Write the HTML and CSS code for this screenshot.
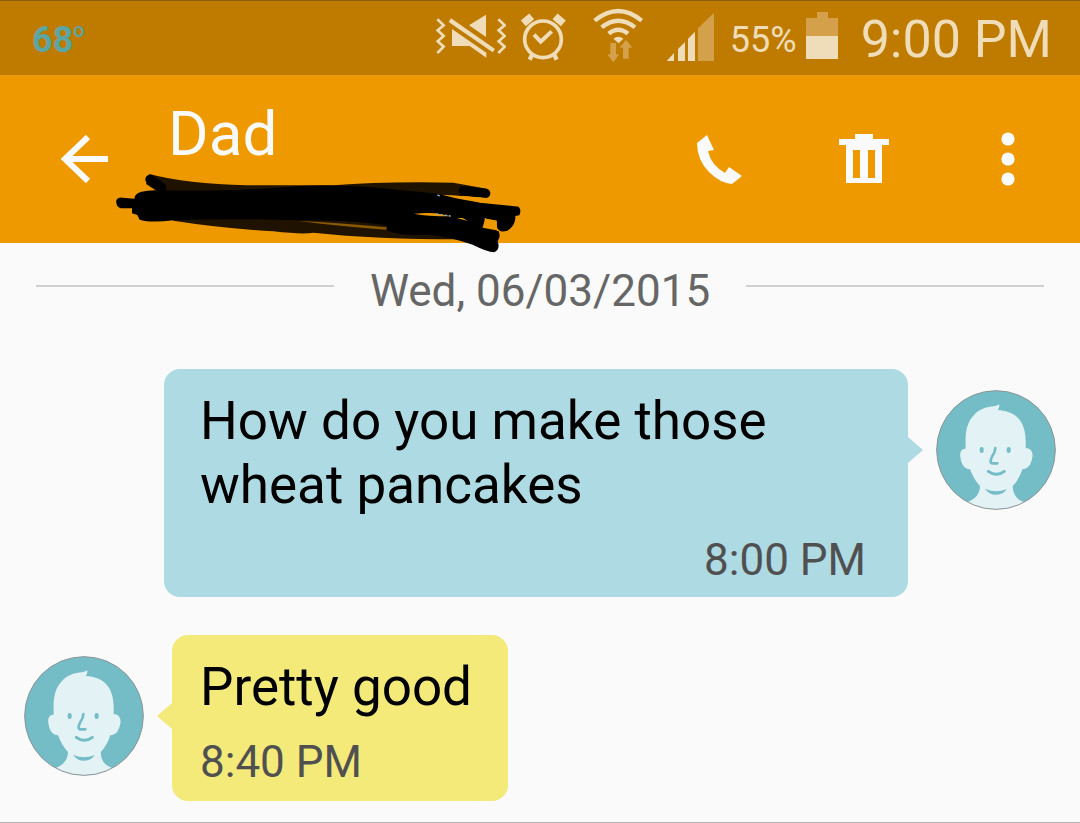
FILE: index.html
```html
<!DOCTYPE html>
<html lang="en">
<head>
    <meta charset="UTF-8">
    <meta name="viewport" content="width=device-width, initial-scale=1.0">
    <title>Messages - Dad</title>
    <link rel="stylesheet" href="styles.css">
</head>
<body>
    <!-- Avatar shared by both sides of the conversation -->
    <svg class="defs" aria-hidden="true">
        <symbol id="avatar" viewBox="138 60 360 360">
            <clipPath id="avatar-clip"><circle cx="318" cy="240" r="179"/></clipPath>
            <circle cx="318" cy="240" r="178" fill="#74bcc6"/>
            <g clip-path="url(#avatar-clip)">
                <path fill="#e2f2f5" d="M227 236 C225 190 229 160 250 137 C268 117 292 110 311 109 Q321 108 328 103 Q329 113 323 120 C350 121 376 131 391 152 C407 176 408 205 407 234 C422 234 430 247 427 262 C424 283 414 298 397 298 C390 320 380 336 368 348 C369 374 380 389 404 396 L404 430 L232 430 L232 396 C255 389 270 371 270 348 C256 334 248 318 240 298 C222 297 213 280 211 261 C209 247 213 236 227 236 Z"/>
                <g fill="none" stroke="#74bcc6" stroke-linecap="round">
                    <path stroke-width="12" d="M275 237 V243 M356 237 V243"/>
                    <path stroke-width="8" stroke-linejoin="round" d="M316 234 Q316 246 307 258 Q296 279 308 280 H322"/>
                    <path stroke-width="9" d="M295 304 Q319 322 343 304"/>
                </g>
                <path fill="#74bcc6" d="M285 356 Q318 371 350 357 Q341 374 318 374 Q297 374 285 356 Z"/>
            </g>
            <circle cx="318" cy="240" r="178" fill="none" stroke="#8b9496" stroke-width="3"/>
        </symbol>
    </svg>

    <div class="status-bar">
        <span class="temperature">68<span class="degree">o</span></span>
        <div class="status-icons">
            <svg width="72" height="75" viewBox="33 0 216 225" role="img" aria-label="Vibrate">
                <g fill="none" stroke="#efdcb8" stroke-width="8">
                    <path d="M43 58 L62 76 L44 91 L62 108 L44 124 L62 140 L43 159"/>
                    <path d="M226 58 L245 76 L227 91 L245 108 L227 124 L245 140 L226 159"/>
                </g>
                <g fill="#efdcb8">
                    <path d="M84 55 L216 147 L209 157 L77 66 Z"/>
                    <path d="M189 44 V111 L138 76 Z"/>
                    <path d="M87 87 L190 158 V173 L140 138 H87 Z"/>
                </g>
            </svg>
            <svg width="58" height="75" viewBox="291 0 174 225" role="img" aria-label="Alarm set">
                <g fill="none" stroke="#efdcb8">
                    <circle cx="360" cy="118" r="55" stroke-width="11"/>
                    <path stroke-width="12" d="M333 104 L353 125 L386 94"/>
                    <path stroke-width="13" d="M328 163 L320 179 M393 163 L401 179"/>
                    <path stroke-width="23" d="M301 70 L326 49 M421 70 L396 49"/>
                </g>
            </svg>
            <svg width="58" height="75" viewBox="507 0 174 225" role="img" aria-label="Wi-Fi">
                <g fill="none" stroke="#efdcb8" stroke-width="13">
                    <path d="M515 62 Q586 4 656 62"/>
                    <path d="M536 82 Q586 42 636 82"/>
                    <path d="M557 101 Q586 77 615 101"/>
                </g>
                <path fill="#efdcb8" d="M571 116 Q586 104 601 116 L587 130 Z"/>
                <path fill="#d4a04a" d="M562 129 H579 V163 H589 L571 187 L553 163 H562 Z M600 176 V143 H590 L609 119 L628 143 H617 V176 Z"/>
            </svg>
            <svg width="52" height="75" viewBox="723 0 156 225" role="img" aria-label="Signal strength">
                <g fill="#efdcb8">
                    <path d="M731 183 L753 159 V183 Z"/>
                    <path d="M765 183 V147 L786 126 V183 Z"/>
                    <path d="M795 183 V116 L816 95 V183 Z"/>
                </g>
                <path fill="#d4a04a" d="M825 183 V85 L873 38 V183 Z"/>
            </svg>
            <div class="battery">
                <span class="percent">55%</span>
                <svg width="34" height="75" viewBox="0 0 34 75" aria-hidden="true">
                    <path fill="#d4a04a" d="M1 36 V18 H12 V12 H23 V18 H33 V36 Z"/>
                    <path fill="#efdcb8" d="M1 36 H33 V59 H1 Z"/>
                </svg>
            </div>
            <time class="clock">9:00 PM</time>
        </div>
    </div>

    <header>
        <button class="back" aria-label="Back">
            <svg width="64" height="64" viewBox="0 0 64 64">
                <path fill="none" stroke="#fafafa" stroke-width="6" d="M56 32 H12 M36 10 L13 32 L36 54"/>
            </svg>
        </button>
        <div class="contact">
            <h1>Dad</h1>
            <div class="number">
                <!-- Number is scribbled out -->
                <svg class="scribble" width="440" height="110" viewBox="0 0 1320 330" aria-hidden="true">
                    <path fill="#1f1300" d="M148 42 Q260 72 440 76 H700 Q850 64 1060 68 L1160 86 V112 L1000 105 L960 155 L1090 168 L1190 210 L1190 245 L1080 238 Q830 238 640 218 Q610 224 520 214 Q360 204 220 182 L180 100 L138 72 Z"/>
                    <path fill="#8a5a00" d="M595 183 Q720 188 860 202 L858 209 Q720 199 595 183 Z"/>
                    <path fill="#000" d="M105 108 Q115 92 165 91 Q420 95 600 78 Q750 72 920 92 Q1060 102 1140 128 L1256 140 Q1265 150 1258 166 L1246 168 Q1248 196 1222 212 Q1197 220 1191 202 L1190 182 Q1160 177 1154 174 Q1158 196 1140 202 L1196 214 Q1203 230 1193 243 Q1202 268 1182 277 Q1162 276 1118 254 Q1050 230 990 224 Q900 228 862 212 L862 197 Q760 180 600 181 Q370 174 220 181 Q150 189 119 179 L112 165 L96 160 V145 H62 Q47 140 49 120 Q54 110 68 113 L103 116 Z"/>
                    <g fill="none" stroke="#000" stroke-linecap="round">
                        <path stroke-width="28" d="M150 58 L185 82 M1090 92 L1157 100"/>
                    </g>
                    <path fill="#ef9900" d="M1026 104 Q1070 106 1160 114 L1170 130 Q1090 122 1026 104 Z M942 161 Q980 158 1006 160 L1055 169 Q980 169 942 161 Z M1070 174 L1104 183 L1088 174 Z M1148 203 L1190 211 V182 L1155 176 Z"/>
                    <path fill="none" stroke="#8fa5aa" stroke-width="4" stroke-dasharray="8 5" d="M1008 162 L1052 168 M1012 105 L1021 108"/>
                </svg>
            </div>
        </div>
        <nav class="actions">
            <button aria-label="Call">
                <svg width="64" height="64" viewBox="0 0 64 64">
                    <path fill="#fafafa" d="M9 16 L19 8 L26 23 L20 24 Q23 38 37 46 L41 40 L54 49 L44 57 Q32 56 21 45 Q9 33 9 16 Z"/>
                </svg>
            </button>
            <button aria-label="Delete">
                <svg width="64" height="64" viewBox="0 0 64 64">
                    <path fill="#fafafa" fill-rule="evenodd" d="M7 12 H23 V7 H41 V12 H57 V18 H50 V56 H14 V18 H7 Z M21 23 V51 H28 V23 Z M36 23 V51 H43 V23 Z"/>
                </svg>
            </button>
            <button aria-label="More options">
                <svg width="64" height="64" viewBox="0 0 64 64" fill="#fafafa">
                    <circle cx="32" cy="12" r="6.6"/>
                    <circle cx="32" cy="32" r="6.6"/>
                    <circle cx="32" cy="52" r="6.6"/>
                </svg>
            </button>
        </nav>
    </header>

    <main>
        <div class="date">Wed, 06/03/2015</div>

        <div class="row sent">
            <div class="bubble">
                <p>How do you make those wheat pancakes</p>
                <time>8:00 PM</time>
            </div>
            <svg class="avatar" role="img" aria-label="Me"><use href="#avatar"/></svg>
        </div>

        <div class="row received">
            <svg class="avatar" role="img" aria-label="Dad"><use href="#avatar"/></svg>
            <div class="bubble">
                <p>Pretty good</p>
                <time>8:40 PM</time>
            </div>
        </div>
    </main>
</body>
</html>
```
FILE: styles.css
```css
* {
    box-sizing: border-box;
}

body {
    font-family: Roboto, sans-serif;
    margin: 0;
    min-height: 100vh;
    background-color: #fafafa;
    border-bottom: 1px solid #b5b5b5;
}

svg {
    display: block;
    flex-shrink: 0;
}

.defs {
    position: absolute;
    width: 0;
    height: 0;
}

.status-bar {
    display: flex;
    justify-content: space-between;
    align-items: center;
    height: 75px;
    padding: 0 28px 0 32px;
    background-color: #bf7b00;
    box-shadow: inset 0 1px #8f5e08;
    color: #efdcb8;
}

.temperature,
.percent,
.clock {
    padding-top: 4px;
}

.temperature {
    display: flex;
    font-size: 36px;
    font-weight: bold;
    line-height: 44px;
    color: #5ba5a2;
}

.degree {
    font-size: 20px;
    font-weight: 500;
    line-height: 24px;
}

.status-icons {
    display: flex;
    align-items: center;
    gap: 14px;
}

.battery {
    display: flex;
    align-items: center;
    gap: 8px;
    font-size: 36px;
}

.clock {
    font-size: 52px;
    padding-left: 8px;
}

header {
    display: flex;
    align-items: center;
    height: 168px;
    background-color: #ef9900;
    color: #fafafa;
}

header button {
    display: flex;
    justify-content: center;
    align-items: center;
    width: 144px;
    height: 168px;
    padding: 0;
    border: none;
    background: none;
    cursor: pointer;
}

header .back {
    width: 168px;
}

.contact {
    flex: 1;
}

.contact h1 {
    margin: 0;
    font-size: 62px;
    font-weight: normal;
    line-height: 72px;
}

.number {
    position: relative;
    height: 51px;
}

.scribble {
    position: absolute;
    left: -68px;
    top: -10px;
}

.actions {
    display: flex;
}

.date {
    display: flex;
    align-items: center;
    gap: 36px;
    padding: 20px 36px 50px;
    font-size: 44px;
    line-height: 56px;
    color: #666;
}

.date::before,
.date::after {
    content: "";
    flex: 1;
    height: 2px;
    margin-bottom: 10px;
    background-color: #d0d0d0;
}

.row {
    display: flex;
    align-items: flex-start;
    gap: 28px;
    padding: 0 24px;
    margin-bottom: 38px;
}

.received {
    margin-bottom: 0;
}

.sent {
    padding-left: 164px;
}

.avatar {
    width: 120px;
    height: 120px;
    margin-top: 21px;
}

.bubble {
    position: relative;
    padding: 20px 36px 12px 28px;
    border-radius: 16px;
    background-color: #f3ea7a;
}

.sent .bubble {
    flex: 1;
    padding: 20px 42px 10px 36px;
    background-color: #aedae3;
}

/* Tail of the bubble */
.bubble::after {
    content: "";
    position: absolute;
    top: 68px;
    right: 100%;
    border: solid transparent;
    border-width: 13px 15px 13px 0;
    border-right-color: #f3ea7a;
}

.sent .bubble::after {
    right: auto;
    left: 100%;
    border-width: 13px 0 13px 15px;
    border-left-color: #aedae3;
}

.bubble p {
    margin: 0 0 16px;
    font-size: 53px;
    line-height: 64px;
    color: #000;
}

.bubble time {
    display: block;
    font-size: 44px;
    line-height: 54px;
    color: #505050;
}

.sent time {
    text-align: right;
}
```
